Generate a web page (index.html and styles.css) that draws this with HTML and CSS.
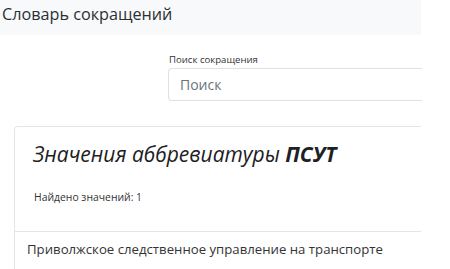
FILE: index.html
```html
<!DOCTYPE html>
<html lang="ru">
<head>
<meta charset="utf-8">
<link rel="stylesheet" href="styles.css">
</head>
<body>
<header class="topbar">
  <h1 class="title">Словарь сокращений</h1>
</header>
<main class="main">
  <div class="search">
    <label class="search-label" for="q">Поиск сокращения</label>
    <input class="search-input" id="q" type="text" placeholder="Поиск">
  </div>
  <section class="card">
    <div class="card-body">
      <h2 class="card-title">Значения аббревиатуры <b>ПСУТ</b></h2>
      <p class="count">Найдено значений: 1</p>
    </div>
    <ul class="list">
      <li class="list-item">Приволжское следственное управление на транспорте</li>
    </ul>
  </section>
</main>
</body>
</html>
```
FILE: styles.css
```css
html, body {
  margin: 0;
  padding: 0;
  background: #fff;
  font-family: "Open Sans", "Noto Sans", sans-serif;
  color: #212529;
  overflow: hidden;
}
.topbar {
  width: 421px;
  height: 35px;
  background: #f8f9fa;
  box-sizing: border-box;
  padding: 2px 0 0 2px;
}
.title {
  margin: 0;
  font-size: 16.2px;
  font-weight: 400;
  line-height: 24px;
  color: #2b2f33;
}
.main {
  width: 407px;
  padding-left: 14px;
}
.search {
  margin: 18px 0 0 154px;
  display: flex;
  flex-direction: column;
}
.search-label {
  font-size: 9.6px;
  line-height: 14px;
  margin: 0 0 1px 1px;
  color: #333;
}
.search-input {
  box-sizing: border-box;
  width: 254px;
  height: 33px;
  border: 1px solid #dde1e5;
  border-right: none;
  border-radius: 4px 0 0 4px;
  padding: 0 11px;
  font-family: inherit;
  font-size: 14px;
  color: #495057;
  outline: none;
}
.search-input::placeholder {
  color: #6c737a;
}
.card {
  margin-top: 25px;
  border: 1px solid #e3e6e9;
  border-right: none;
  border-bottom: none;
  border-radius: 4px 0 0 0;
  height: 142px;
}
.card-body {
  padding: 12px 18px 0 18px;
  height: 92px;
}
.card-title {
  margin: 0;
  font-size: 21px;
  font-weight: 400;
  font-style: italic;
  line-height: 30px;
  color: #1d2124;
}
.card-title b {
  font-weight: 700;
}
.count {
  margin: 21px 0 0 1px;
  font-size: 10.4px;
  line-height: 14px;
  color: #333;
}
.list {
  list-style: none;
  margin: 0;
  padding: 0;
  border-top: 1px solid #e3e6e9;
}
.list-item {
  padding: 7px 0 0 12px;
  font-size: 13.2px;
  line-height: 20px;
  color: #333;
}
```
